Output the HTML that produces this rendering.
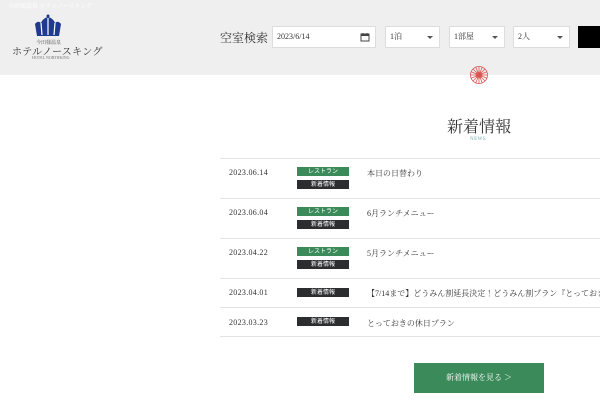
<!DOCTYPE html>
<html><head><meta charset="utf-8"><style>
*{margin:0;padding:0;box-sizing:border-box}
html,body{width:600px;height:400px;overflow:hidden}
body{background:#fff;font-family:"Liberation Serif","Noto Serif CJK SC",serif;color:#333;position:relative}
.wrap{position:absolute;left:0;top:0;width:600px;height:400px;overflow:hidden}
.hd{position:absolute;left:0;top:0;width:600px;height:75px;background:#efefef}
.abs{position:absolute}
.in{position:absolute;top:26px;height:22px;background:#fff;border:1px solid #ddd;font-size:8px;line-height:20px;padding-left:4px;color:#333}
.arr{position:absolute;right:6px;top:9px;border-left:3px solid transparent;border-right:3px solid transparent;border-top:3px solid #555}
.line{position:absolute;left:220px;width:380px;height:1px;background:#e3e3e3}
.date{position:absolute;left:229px;font-size:8px;letter-spacing:.3px}
.tag{position:absolute;left:297px;width:52px;height:9px;overflow:hidden;color:#fff;text-align:center;font-family:"Liberation Sans","Noto Sans CJK JP",sans-serif}
.tag span{display:block;font-size:6px;line-height:6px;margin-top:1.5px}
.g{background:#3a8a5a}.k{background:#2b2d2f}
.t{position:absolute;left:367px;font-size:8px;white-space:nowrap;font-family:"Liberation Serif","Noto Serif CJK JP",serif}
</style></head><body><div class="wrap">
<div class="hd"></div>
<div class="abs" style="left:8px;top:1px;font-size:6px;color:#fff">今田様温泉 ホテルノースキング</div>
<svg class="abs" style="left:32px;top:14px" width="32" height="26" viewBox="0 0 32 26"><path d="M3 10 Q6 6 9 9 Q11 4 16 3 Q21 4 23 9 Q26 6 29 10 L27 22 L5 22Z" fill="#1f3a8f"/><path d="M9 9 L10 21 M16 4 L16 21 M23 9 L22 21" stroke="#fff" stroke-width="1.2"/><circle cx="16" cy="2" r="1.5" fill="#1f3a8f"/></svg>
<div class="abs" style="left:36px;top:39px;font-size:5px;color:#555">今田様温泉</div>
<div class="abs" style="left:12px;top:43px;font-size:10px;color:#333;font-family:'Liberation Serif','Noto Serif CJK JP',serif;letter-spacing:.3px">ホテルノースキング</div>
<div class="abs" style="left:32px;top:55px;font-size:4px;color:#777">HOTEL NORTHKING</div>
<div class="abs" style="left:220px;top:29px;font-size:12px;color:#333">空室検索</div>
<div class="in" style="left:272px;width:104px">2023/6/14<svg style="position:absolute;right:5px;top:5px" width="10" height="10"><rect x="1" y="2" width="8" height="7" fill="none" stroke="#444"/><rect x="1" y="2" width="8" height="2" fill="#444"/><path d="M3 1v2M7 1v2" stroke="#444"/></svg></div>
<div class="in" style="left:385px;width:55px">1泊<span class="arr"></span></div>
<div class="in" style="left:449px;width:56px">1部屋<span class="arr"></span></div>
<div class="in" style="left:513px;width:57px">2人<span class="arr"></span></div>
<div class="abs" style="left:578px;top:26px;width:22px;height:22px;background:#000"></div>
<svg class="abs" style="left:469px;top:65px" width="20" height="20" viewBox="0 0 20 20"><g stroke="#d9534f" stroke-width=".8" fill="none"><circle cx="10" cy="10" r="8.5"/><circle cx="10" cy="10" r="3"/><path d="M10 1.5V18.5M1.5 10H18.5M4 4L16 16M16 4L4 16M6.7 2.1L13.3 17.9M13.3 2.1L6.7 17.9M2.1 6.7L17.9 13.3M2.1 13.3L17.9 6.7"/></g></svg>
<div class="abs" style="left:447px;top:114px;font-size:16px;color:#333;font-family:'Liberation Serif','Noto Serif CJK JP',serif">新着情報</div>
<div class="abs" style="left:470px;top:137px;font-size:5px;color:#7aa;letter-spacing:.5px">NEWS</div>
<div class="line" style="top:158px"></div>
<div class="line" style="top:198px"></div>
<div class="line" style="top:238px"></div>
<div class="line" style="top:278px"></div>
<div class="line" style="top:307px"></div>
<div class="line" style="top:336px"></div>
<div class="date" style="top:168px">2023.06.14</div>
<div class="tag g" style="top:167px"><span>レストラン</span></div><div class="tag k" style="top:180px"><span>新着情報</span></div>
<div class="t" style="top:168px">本日の日替わり</div>
<div class="date" style="top:208px">2023.06.04</div>
<div class="tag g" style="top:207px"><span>レストラン</span></div><div class="tag k" style="top:220px"><span>新着情報</span></div>
<div class="t" style="top:208px">6月ランチメニュー</div>
<div class="date" style="top:248px">2023.04.22</div>
<div class="tag g" style="top:247px"><span>レストラン</span></div><div class="tag k" style="top:260px"><span>新着情報</span></div>
<div class="t" style="top:248px">5月ランチメニュー</div>
<div class="date" style="top:288px">2023.04.01</div>
<div class="tag k" style="top:288px"><span>新着情報</span></div>
<div class="t" style="top:288px;width:233px;overflow:hidden">【7/14まで】どうみん割延長決定！どうみん割プラン『とっておきの休日』</div>
<div class="date" style="top:318px">2023.03.23</div>
<div class="tag k" style="top:317px"><span>新着情報</span></div>
<div class="t" style="top:318px">とっておきの休日プラン</div>
<div class="abs" style="left:414px;top:363px;width:130px;height:30px;background:#3a8a5a;color:#fff;font-size:8px;text-align:center;line-height:30px;font-family:'Liberation Serif','Noto Serif CJK JP',serif">新着情報を見る ＞</div>
</div></body></html>
